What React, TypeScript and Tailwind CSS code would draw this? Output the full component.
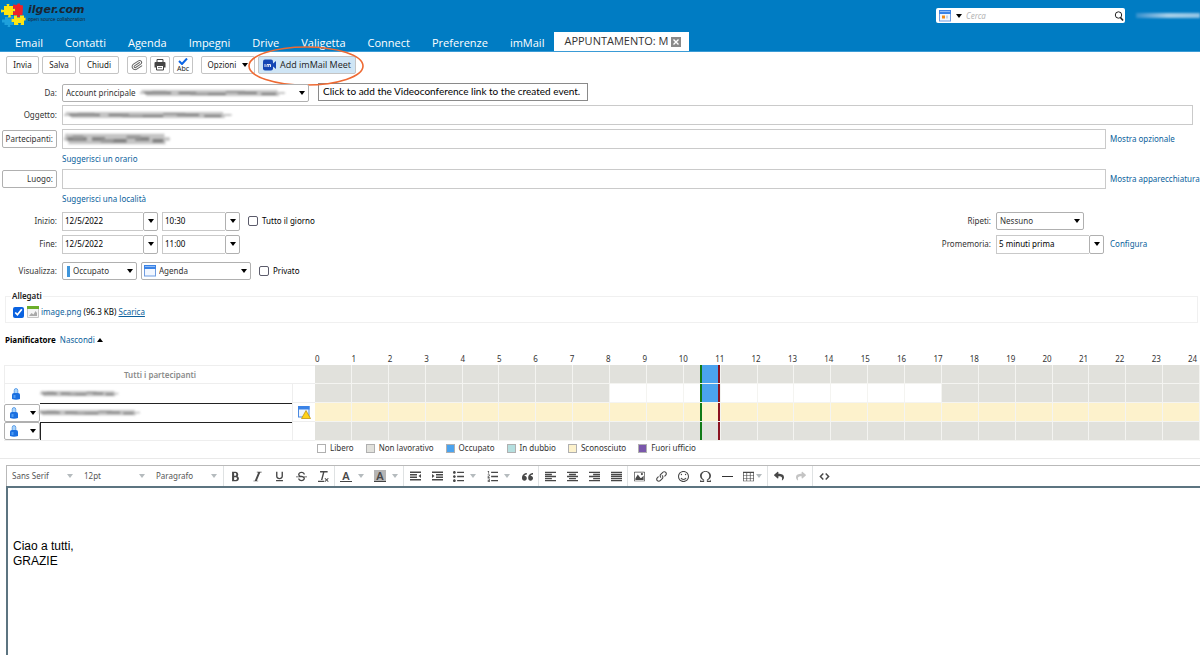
import type { ReactNode } from "react";
import {
  ImBold,
  ImClearFormatting,
  ImEmbed,
  ImImage,
  ImItalic,
  ImLink,
  ImListNumbered,
  ImList2,
  ImOmega,
  ImParagraphCenter,
  ImParagraphJustify,
  ImParagraphLeft,
  ImParagraphRight,
  ImQuotesLeft,
  ImSmile,
  ImStrikethrough,
  ImTable2,
  ImUnderline,
} from "react-icons/im";
import { FaReply, FaShare } from "react-icons/fa";
import { Paperclip } from "lucide-react";

const NAV = ["Email", "Contatti", "Agenda", "Impegni", "Drive", "Valigetta", "Connect", "Preferenze", "imMail"];
const HOURS = Array.from({ length: 24 }, (_, i) => i);

const LEGEND = [
  { label: "Libero", color: "bg-white" },
  { label: "Non lavorativo", color: "bg-[#e1e1dc]" },
  { label: "Occupato", color: "bg-[#4ba3ee]" },
  { label: "In dubbio", color: "bg-[#b5dfdf]" },
  { label: "Sconosciuto", color: "bg-[#fdf2cc]" },
  { label: "Fuori ufficio", color: "bg-[#7a57ab]" },
];

function Caret({ className = "text-black" }: { className?: string }) {
  return (
    <svg viewBox="0 0 6 4" className={`h-[4px] w-[6px] shrink-0 ${className}`} aria-hidden="true">
      <path d="M0 0h6L3 4z" fill="currentColor" />
    </svg>
  );
}

// Stands in for a value that is hidden on purpose
function Smudge({ className }: { className: string }) {
  return (
    <svg viewBox="0 0 100 8" preserveAspectRatio="none" className={`blur-[1px] ${className}`} aria-hidden="true">
      <path d="M1 2h92M0 4h98M4 6h90" stroke="#c4c4c4" strokeWidth="2" />
      <path d="M3 4h18M26 4h12M44 5h14M66 4h13M82 5h10" stroke="#808080" strokeWidth="2" />
      <path d="M8 3h10M34 5h12M58 3h13" stroke="#999" strokeWidth="2" />
    </svg>
  );
}

function Logo() {
  return (
    <a href="#home" className="flex items-start gap-[2px] pt-[3px] pl-px text-[#1c2430]">
      <svg viewBox="0 0 25 24" className="h-[24px] w-[25px]" aria-hidden="true">
        <path d="M3 3h3l-.5-2h3L8 3h4v3l2-.5v3L12 8v4H9.500l.5 2.500H7L7.500 12H3V9L0 9.500v-3L3 7z" fill="#ffe512" />
        <path d="M12 1.500l4 .5.500-1.500h2.500L19 2l3 .5-.5 9.500h-3l.5 2h-3l.5-2H12V8.500h2v-3h-2z" fill="#ee2229" />
        <path d="M4 14h3v1.500h3V13h2.500v3h-2v3h2v3H9l.5 2H6.500l.5-2H3.500v-2.500H1v-3h3z" fill="#1ea0dc" />
        <path d="M13 12.500h3v2h3v-2h4V15l1.500-.5v3L23 17.500V22h-3.500l.5-2h-3l.5 2H13v-3h-2.500v-3H13z" fill="#ffe512" />
      </svg>
      <span className="flex flex-col">
        <span className="font-['DejaVu_Sans'] text-[11px] leading-[13px] font-bold italic">ilger.com</span>
        <span className="font-['Liberation_Sans'] text-[5px] leading-[6px]">open source collaboration</span>
      </span>
    </a>
  );
}

function CalendarIcon({ event = false }: { event?: boolean }) {
  return (
    <svg viewBox="0 0 12 12" className="h-[12px] w-[12px] shrink-0" aria-hidden="true">
      <rect x="0.5" y="0.5" width="11" height="10.5" fill="#f2f7ff" stroke="#6f9ce0" />
      <path d="M0 0h12v4H0z" fill="#3b83e6" />
      <path d="M1 1h10v1H1z" fill="#8fbcf7" />
      {event && <path d="M3 5.500h3v3H3z" fill="#f58a14" />}
      {event && <path d="M7 5.500h2v3H7z" fill="#c9d5e6" />}
    </svg>
  );
}

function PersonIcon() {
  return (
    <svg viewBox="0 0 8 12" className="h-[12px] w-[8px] shrink-0" aria-hidden="true">
      <path d="M2.200 6V2.500q0-2 1.800-2t1.800 2V6z" fill="#a9d4fb" stroke="#4b93e4" strokeWidth="0.800" />
      <path d="M0 6.500Q0 5 2 5h4q2 0 2 1.500V11q-4 1.500-8 0z" fill="#1a6fe0" />
      <path d="M1.500 7h2v3h-2z" fill="#4d9cf5" />
    </svg>
  );
}

function ToolButton({ children, label, className = "px-[6px]" }: { children: ReactNode; label?: string; className?: string }) {
  return (
    <button
      type="button"
      aria-label={label}
      className={`flex h-[18px] items-center justify-center rounded-[2px] border border-[#c4c4c4] ${className}`}
    >
      {children}
    </button>
  );
}

function Select({
  id,
  label,
  value,
  className,
  children,
}: {
  id: string;
  label?: string;
  value: string;
  className: string;
  children?: ReactNode;
}) {
  return (
    <span className={`relative flex h-[18px] shrink-0 items-center rounded-[2px] border border-[#b0b0b0] bg-white ${className}`}>
      {children}
      <select id={id} aria-label={label} className="h-full min-w-0 flex-1 appearance-none pl-[3px] outline-none">
        <option>{value}</option>
      </select>
      <span className="pointer-events-none absolute right-[3px] flex">
        <Caret />
      </span>
    </span>
  );
}

function Combo({ id, label, value, className }: { id?: string; label: string; value: string; className: string }) {
  return (
    <span className={`flex h-[19px] shrink-0 ${className}`}>
      <input
        id={id}
        aria-label={label}
        defaultValue={value}
        className="min-w-0 flex-1 border border-r-0 border-[#c9c9c9] pl-[2px] text-black outline-none"
      />
      <button
        type="button"
        aria-label={`Apri ${label}`}
        className="flex w-[15px] items-center justify-center rounded-[2px] border border-[#b0b0b0]"
      >
        <Caret />
      </button>
    </span>
  );
}

function Check({ label }: { label: string }) {
  return (
    <label className="flex items-center gap-1 text-black">
      <input type="checkbox" className="size-[10px] appearance-none rounded-[2px] border border-[#5b5b6b] bg-white" />
      {label}
    </label>
  );
}

function Row({ children, className = "" }: { children: ReactNode; className?: string }) {
  return <div className={`flex h-5 items-center ${className}`}>{children}</div>;
}

const labelClass = "mr-[5px] w-[57px] shrink-0 text-right";
const labelButtonClass = "mr-[5px] ml-[2px] h-[18px] w-[55px] shrink-0 rounded-[2px] border border-[#b0b0b0] pr-[3px] text-right";
const fieldClass = "h-full w-full border border-[#cacaca] px-1 outline-none";
const linkClass = "text-[#0b5f9c]";

function Header() {
  return (
    <header className="flex h-[52px] flex-col justify-between border-b border-[#3a9bd6] bg-[#007cc3]">
      <div className="flex h-[32px] items-start">
        <Logo />
        <div className="mt-2 ml-auto flex h-[15px] w-[189px] items-center gap-1 rounded-[2px] bg-white pr-px pl-[3px]">
          <button type="button" aria-label="Tipo di ricerca" className="flex items-center gap-[5px]">
            <CalendarIcon event />
            <Caret />
          </button>
          <input
            aria-label="Cerca"
            placeholder="Cerca"
            className="min-w-0 flex-1 text-[8px] italic outline-none placeholder:text-[#b5b5b5]"
          />
          <button type="button" aria-label="Avvia ricerca">
            <svg viewBox="0 0 10 10" className="size-[10px]" fill="none" stroke="#222">
              <circle cx="4.500" cy="4" r="3.200" />
              <path d="M6.500 6.500L9 9.500" strokeWidth="1.600" />
            </svg>
          </button>
        </div>
        <div className="mt-[13px] ml-[11px] h-[5px] w-16 bg-linear-to-r from-[#2c8fcd] via-[#a5cfe9] to-[#8fc3e4] blur-[1px]" />
      </div>
      <nav className="flex items-end pl-[15px] font-['Open_Sans'] text-[11px] text-white">
        <div className="flex gap-[22px] leading-[17px]">
          {NAV.map((item) => (
            <a key={item} href={`#${item.toLowerCase()}`}>
              {item}
            </a>
          ))}
        </div>
        <div className="ml-[10px] flex h-[19px] items-center gap-[3px] bg-white pr-2 pl-[10px] text-[#333]">
          <a href="#appuntamento">APPUNTAMENTO: M</a>
          <button type="button" aria-label="Chiudi scheda" className="bg-[#8a8a8a]">
            <svg viewBox="0 0 10 10" className="size-[10px]" stroke="#fff" strokeWidth="1.400">
              <path d="M2.500 2.500l5 5M7.500 2.500l-5 5" />
            </svg>
          </button>
        </div>
      </nav>
    </header>
  );
}

function ActionBar() {
  return (
    <div className="flex h-[25px] items-center gap-[3px] pl-[6px] text-[#222]">
      <ToolButton className="w-[33px]">Invia</ToolButton>
      <ToolButton className="w-[34px]">Salva</ToolButton>
      <ToolButton className="w-[40px]">Chiudi</ToolButton>
      <div className="ml-[5px] flex gap-[3px]">
        <ToolButton label="Allega" className="w-[20px]">
          <Paperclip className="size-[12px] rotate-12 text-[#666]" strokeWidth={2} />
        </ToolButton>
        <ToolButton label="Stampa" className="w-[20px]">
          <svg viewBox="0 0 12 12" className="size-[12px]" aria-hidden="true">
            <path d="M3 0.500h6v3H3z" fill="#fff" stroke="#444" />
            <path d="M0.500 4q0-1 1-1h9q1 0 1 1v4.500h-11z" fill="#444" />
            <path d="M2.500 6.500h7v4.500h-7z" fill="#fff" stroke="#444" />
            <path d="M4 8.500h4" stroke="#777" />
          </svg>
        </ToolButton>
        <ToolButton label="Controllo ortografico" className="w-[20px] flex-col">
          <svg viewBox="0 0 10 7" className="h-[7px] w-[10px]" fill="none" stroke="#0a64e6" strokeWidth="2">
            <path d="M1 3l3 3 5-5.500" />
          </svg>
          <span className="text-[7px] leading-[7px]">Abc</span>
        </ToolButton>
      </div>
      <ToolButton className="ml-[5px] w-[54px] gap-[6px]">
        Opzioni <Caret />
      </ToolButton>
      <div className="relative">
        <ToolButton className="gap-1 bg-[#cfe5f5] px-[4px] font-['Open_Sans']">
          <svg viewBox="0 0 13 12" className="h-[12px] w-[13px]" aria-hidden="true">
            <rect y="0.500" width="10" height="11" rx="2" fill="#1446b4" />
            <path d="M10 4.500l3-2.500v8l-3-2.500z" fill="#1446b4" />
            <path d="M2 5v3M4 8V5.500h1.700V8M5.700 5.500h1.800V8" stroke="#fff" strokeWidth="0.900" fill="none" />
          </svg>
          <span className="text-[9px]">Add imMail Meet</span>
        </ToolButton>
        <svg
          viewBox="0 0 116 40"
          className="pointer-events-none absolute -top-[10px] -left-[10px] h-[40px] w-[116px]"
          fill="none"
          aria-hidden="true"
        >
          <ellipse cx="58" cy="20" rx="57" ry="19" stroke="#ee6a33" strokeWidth="1.600" />
        </svg>
      </div>
    </div>
  );
}

function EventForm() {
  return (
    <form className="flex flex-col pt-[6px]">
      <Row>
        <label htmlFor="from" className={labelClass}>
          Da:
        </label>
        <Select id="from" value="Account principale" className="w-[247px]">
          <Smudge className="pointer-events-none absolute left-[77px] h-[8px] w-[148px]" />
        </Select>
        <span
          role="tooltip"
          className="mb-[3px] ml-[9px] flex h-[18px] w-[270px] items-center border border-[#8a8a8a] bg-white pl-1 font-['Lato'] text-[10px] whitespace-nowrap text-black"
        >
          Click to add the Videoconference link to the created event.
        </span>
      </Row>
      <Row className="mt-[2px] pr-[7px]">
        <label htmlFor="subject" className={labelClass}>
          Oggetto:
        </label>
        <div className="relative flex h-full flex-1 items-center">
          <input id="subject" className={fieldClass} />
          <Smudge className="pointer-events-none absolute left-[2px] h-[8px] w-[171px]" />
        </div>
      </Row>
      <Row className="mt-1">
        <button type="button" className={labelButtonClass}>
          Partecipanti:
        </button>
        <div className="relative flex h-full flex-1 items-center">
          <input aria-label="Partecipanti" className={fieldClass} />
          <Smudge className="pointer-events-none absolute left-[2px] h-[14px] w-[108px]" />
        </div>
        <a href="#opzionale" className={`w-[94px] pl-1 whitespace-nowrap ${linkClass}`}>
          Mostra opzionale
        </a>
      </Row>
      <Row className="pl-[62px]">
        <a href="#orario" className={linkClass}>
          Suggerisci un orario
        </a>
      </Row>
      <Row>
        <button type="button" className={labelButtonClass}>
          Luogo:
        </button>
        <input aria-label="Luogo" className={`flex-1 ${fieldClass}`} />
        <a href="#apparecchiatura" className={`w-[94px] shrink-0 pl-1 whitespace-nowrap ${linkClass}`}>
          Mostra apparecchiatura
        </a>
      </Row>
      <Row className="pl-[62px]">
        <a href="#localita" className={linkClass}>
          Suggerisci una località
        </a>
      </Row>
      <Row className="mt-[2px]">
        <label htmlFor="start" className={labelClass}>
          Inizio:
        </label>
        <Combo id="start" label="Data inizio" value="12/5/2022" className="mr-1 w-[96px]" />
        <Combo label="Ora inizio" value="10:30" className="mr-2 w-[78px]" />
        <Check label="Tutto il giorno" />
        <div className="ml-auto flex w-[266px] items-center">
          <label htmlFor="repeat" className={labelClass}>
            Ripeti:
          </label>
          <Select id="repeat" value="Nessuno" className="w-[88px]" />
        </div>
      </Row>
      <Row className="mt-[3px]">
        <label htmlFor="end" className={labelClass}>
          Fine:
        </label>
        <Combo id="end" label="Data fine" value="12/5/2022" className="mr-1 w-[96px]" />
        <Combo label="Ora fine" value="11:00" className="w-[78px]" />
        <div className="ml-auto flex w-[266px] items-center">
          <label htmlFor="reminder" className={labelClass}>
            Promemoria:
          </label>
          <Combo id="reminder" label="Promemoria" value="5 minuti prima" className="w-[108px]" />
          <a href="#configura" className={`ml-[6px] ${linkClass}`}>
            Configura
          </a>
        </div>
      </Row>
      <Row className="mt-[7px]">
        <label htmlFor="show" className={labelClass}>
          Visualizza:
        </label>
        <Select id="show" value="Occupato" className="mr-1 w-[75px]">
          <span className="ml-[4px] h-[11px] w-[3px] bg-[#3f96dc]" />
        </Select>
        <Select id="calendar" label="Calendario" value="Agenda" className="mr-2 w-[110px] pl-[2px]">
          <CalendarIcon />
        </Select>
        <Check label="Privato" />
      </Row>
      <fieldset className="mr-[2px] ml-[5px] mt-[10px] border border-[#f0f0f0] px-[5px] pt-[2px] pb-px">
        <legend className="px-px text-[8px] leading-[10px] font-semibold text-[#222]">Allegati</legend>
        <div className="flex h-[18px] items-center">
          <input id="attachment" type="checkbox" defaultChecked className="mr-[3px] ml-[2px] size-[11px] accent-[#0a62e0]" />
          <svg viewBox="0 0 12 12" className="mr-[2px] size-[12px]" aria-hidden="true">
            <path d="M0.500 0.500h11v11h-11z" fill="#f4f4f4" stroke="#c4c4c4" />
            <path d="M0 0h12v3H0z" fill="#6cae2a" />
            <path d="M2 10l2.500-3 2 1.500L8.500 5l1.500 2v3z" fill="#a9a9a9" />
          </svg>
          <label htmlFor="attachment" className="whitespace-pre text-black">
            <span className={linkClass}>image.png</span> (96.3 KB){" "}
          </label>
          <a href="#scarica" className={`underline ${linkClass}`}>
            Scarica
          </a>
        </div>
      </fieldset>
    </form>
  );
}

function PersonPicker() {
  return (
    <button
      type="button"
      aria-label="Tipo di partecipante"
      className="flex h-[18px] w-[36px] shrink-0 items-center justify-between rounded-[2px] border border-[#b0b0b0] bg-white pr-[3px] pl-[5px]"
    >
      <PersonIcon />
      <Caret />
    </button>
  );
}

function HourCells({ row }: { row: "all" | "person" | "unknown" | "empty" }) {
  return HOURS.map((hour) => {
    const free = row === "person" && hour >= 8 && hour < 17;
    const color = row === "unknown" ? "bg-[#fdf2cc]" : free ? "bg-white" : "bg-[#e1e1dc]";
    const busy = row === "all" || row === "person";
    return (
      <td key={hour} className={`h-[19px] border-r border-b border-[#f4f4f1] p-0 ${color}`}>
        {hour === 10 && (
          <div
            className={`ml-auto h-[18px] w-[calc(50%+2px)] border-r-2 border-l-2 border-r-[#8b1220] border-l-[#117a17] ${
              busy ? "bg-[#4ba3ee]" : ""
            }`}
          />
        )}
      </td>
    );
  });
}

function Planner() {
  return (
    <section className="pt-[11px]">
      <h2 className="flex h-[12px] items-center gap-1 pl-[5px] text-[8px]">
        <span className="font-bold text-black">Pianificatore</span>
        <button type="button" className={`flex items-center gap-[2px] ${linkClass}`}>
          Nascondi
          <Caret className="rotate-180 text-black" />
        </button>
      </h2>
      <table className="ml-[4px] w-[calc(100%-4px)] table-fixed border-separate border-spacing-0">
        <colgroup>
          <col className="w-[289px]" />
          <col className="w-[22px]" />
          {HOURS.map((hour) => (
            <col key={hour} />
          ))}
        </colgroup>
        <thead>
          <tr>
            <td colSpan={2} />
            <th colSpan={24} className="h-[19px] p-0 align-bottom font-normal text-[#333]">
              <div className="flex leading-[12px]">
                {HOURS.map((hour) => (
                  <span key={hour} className="flex-1 text-left">
                    {hour}
                  </span>
                ))}
                <span className="w-[12px] text-left">24</span>
              </div>
            </th>
          </tr>
        </thead>
        <tbody>
          <tr>
            <th colSpan={2} className="border border-r-0 border-[#eeeeee] p-0 text-[8px] font-semibold text-[#8a8a8a]">
              Tutti i partecipanti
            </th>
            <HourCells row="all" />
          </tr>
          <tr>
            <td className="border-r border-l border-[#eeeeee] p-0">
              <div className="flex items-center pl-[7px]">
                <PersonIcon />
                <Smudge className="ml-[20px] h-[7px] w-[80px]" />
              </div>
            </td>
            <td className="border-b border-[#eeeeee]" />
            <HourCells row="person" />
          </tr>
          <tr>
            <td className="border-r border-[#eeeeee] p-0">
              <div className="relative flex h-[19px] items-center">
                <PersonPicker />
                <input aria-label="Partecipante 2" className="h-full min-w-0 flex-1 border-t border-[#222] outline-none" />
                <Smudge className="pointer-events-none absolute left-[34px] h-[7px] w-[104px]" />
              </div>
            </td>
            <td className="border-b border-[#eeeeee] p-0">
              <svg viewBox="0 0 13 13" className="ml-[5px] size-[13px]" aria-hidden="true">
                <rect x="0.500" y="0.500" width="10.500" height="10.500" fill="#eef5ff" stroke="#4c8ae0" />
                <path d="M0 0h11.500v3.500H0z" fill="#3b83e6" />
                <path d="M8 4.500l4.500 8h-9z" fill="#ffd21a" stroke="#b98a00" strokeWidth="0.700" />
              </svg>
            </td>
            <HourCells row="unknown" />
          </tr>
          <tr>
            <td className="border-r border-[#eeeeee] p-0">
              <div className="flex h-[19px] items-center border-b border-[#eeeeee]">
                <PersonPicker />
                <input
                  aria-label="Partecipante 3"
                  className="h-full min-w-0 flex-1 border-t border-l border-[#222] outline-none"
                />
              </div>
            </td>
            <td className="border-b border-[#eeeeee]" />
            <HourCells row="empty" />
          </tr>
        </tbody>
      </table>
      <ul className="mt-px flex h-[12px] items-center gap-[12px] pl-[317px] text-[#333]">
        {LEGEND.map((item) => (
          <li key={item.label} className="flex items-center gap-1">
            <span className={`size-[9px] border border-[#b0b0b0] ${item.color}`} />
            {item.label}
          </li>
        ))}
      </ul>
    </section>
  );
}

function EditorButton({
  label,
  className = "w-[22px] justify-center",
  children,
}: {
  label: string;
  className?: string;
  children: ReactNode;
}) {
  return (
    <button type="button" aria-label={label} className={`flex h-full items-center ${className}`}>
      {children}
    </button>
  );
}

const menuClass = "w-[34px] gap-[6px] pl-[5px]";

function MenuCaret() {
  return <Caret className="text-[#b5bbbe]" />;
}

function IndentIcon({ arrow }: { arrow: string }) {
  return (
    <svg viewBox="0 0 11 10" className="h-[10px] w-[11px]" fill="currentColor" aria-hidden="true">
      <path d="M0 0.500h11v1.500H0zM0 8h11v1.500H0z" />
      <path d={arrow} />
    </svg>
  );
}

function EditorSelect({ label, value }: { label: string; value: string }) {
  return (
    <span className="relative flex h-full w-[72px] items-center">
      <select aria-label={label} className="h-full w-full appearance-none pl-[5px] text-[#555] outline-none">
        <option>{value}</option>
      </select>
      <span className="pointer-events-none absolute right-[6px] flex">
        <MenuCaret />
      </span>
    </span>
  );
}

function EditorGroup({ children }: { children: ReactNode }) {
  return <div className="flex h-full border-r border-[#dfe2e3] last:border-r-0">{children}</div>;
}

function Editor() {
  return (
    <section className="mt-[4px] flex flex-1 flex-col border-t border-[#e9e9e9] pt-[6px] pl-[6px]">
      <div className="flex h-[21px] items-center border-t border-l border-[#b9b9b9] text-[11px] text-[#484848]">
        <div className="flex h-full border-r border-[#dfe2e3] text-[8px]">
          <EditorSelect label="Carattere" value="Sans Serif" />
          <EditorSelect label="Dimensione" value="12pt" />
          <EditorSelect label="Formato" value="Paragrafo" />
        </div>
        <EditorGroup>
          <EditorButton label="Grassetto"><ImBold /></EditorButton>
          <EditorButton label="Corsivo"><ImItalic /></EditorButton>
          <EditorButton label="Sottolineato"><ImUnderline /></EditorButton>
          <EditorButton label="Barrato"><ImStrikethrough /></EditorButton>
          <EditorButton label="Cancella formattazione"><ImClearFormatting /></EditorButton>
        </EditorGroup>
        <EditorGroup>
          <EditorButton label="Colore testo" className={menuClass}>
            <span className="w-[12px] border-b border-[#444] text-center leading-[11px] font-semibold">A</span>
            <MenuCaret />
          </EditorButton>
          <EditorButton label="Colore sfondo" className={menuClass}>
            <span className="w-[12px] border-b border-[#444] bg-[#b5b5b5] text-center leading-[11px] font-semibold">A</span>
            <MenuCaret />
          </EditorButton>
        </EditorGroup>
        <EditorGroup>
          <EditorButton label="Riduci rientro">
            <IndentIcon arrow="M0 3h7v1.500H0zM0 5.500h7V7H0zM11 3v4L8.500 5z" />
          </EditorButton>
          <EditorButton label="Aumenta rientro">
            <IndentIcon arrow="M4 3h7v1.500H4zM4 5.500h7V7H4zM0 3v4l2.500-2z" />
          </EditorButton>
          <EditorButton label="Elenco puntato" className={menuClass}>
            <ImList2 />
            <MenuCaret />
          </EditorButton>
          <EditorButton label="Elenco numerato" className={menuClass}>
            <ImListNumbered />
            <MenuCaret />
          </EditorButton>
          <EditorButton label="Citazione"><ImQuotesLeft /></EditorButton>
        </EditorGroup>
        <EditorGroup>
          <EditorButton label="Allinea a sinistra"><ImParagraphLeft /></EditorButton>
          <EditorButton label="Centra"><ImParagraphCenter /></EditorButton>
          <EditorButton label="Allinea a destra"><ImParagraphRight /></EditorButton>
          <EditorButton label="Giustifica"><ImParagraphJustify /></EditorButton>
        </EditorGroup>
        <EditorGroup>
          <EditorButton label="Immagine"><ImImage /></EditorButton>
          <EditorButton label="Collegamento"><ImLink /></EditorButton>
          <EditorButton label="Emoticon"><ImSmile /></EditorButton>
          <EditorButton label="Carattere speciale"><ImOmega /></EditorButton>
          <EditorButton label="Linea orizzontale">
            <span className="h-px w-[11px] bg-[#333]" />
          </EditorButton>
          <EditorButton label="Tabella" className="w-[29px] gap-[2px] pl-[5px]">
            <ImTable2 />
            <MenuCaret />
          </EditorButton>
        </EditorGroup>
        <EditorGroup>
          <EditorButton label="Annulla"><FaReply className="text-[10px]" /></EditorButton>
          <EditorButton label="Ripeti"><FaShare className="text-[10px] text-[#c4c4c4]" /></EditorButton>
        </EditorGroup>
        <EditorGroup>
          <EditorButton label="Codice sorgente"><ImEmbed /></EditorButton>
        </EditorGroup>
      </div>
      <div
        contentEditable
        suppressContentEditableWarning
        role="textbox"
        aria-label="Messaggio"
        className="flex-1 border-t-2 border-l-2 border-[#5c7480] px-[5px] pt-[51px] font-['Liberation_Sans'] text-[12px] leading-[15px] text-black outline-none"
      >
        <p>Ciao a tutti,</p>
        <p>GRAZIE</p>
      </div>
    </section>
  );
}

export default function App() {
  return (
    <div className="flex min-h-screen flex-col overflow-x-hidden bg-white font-['Noto_Sans',sans-serif] text-[8px] text-[#333]">
      <Header />
      <ActionBar />
      <EventForm />
      <Planner />
      <Editor />
    </div>
  );
}
